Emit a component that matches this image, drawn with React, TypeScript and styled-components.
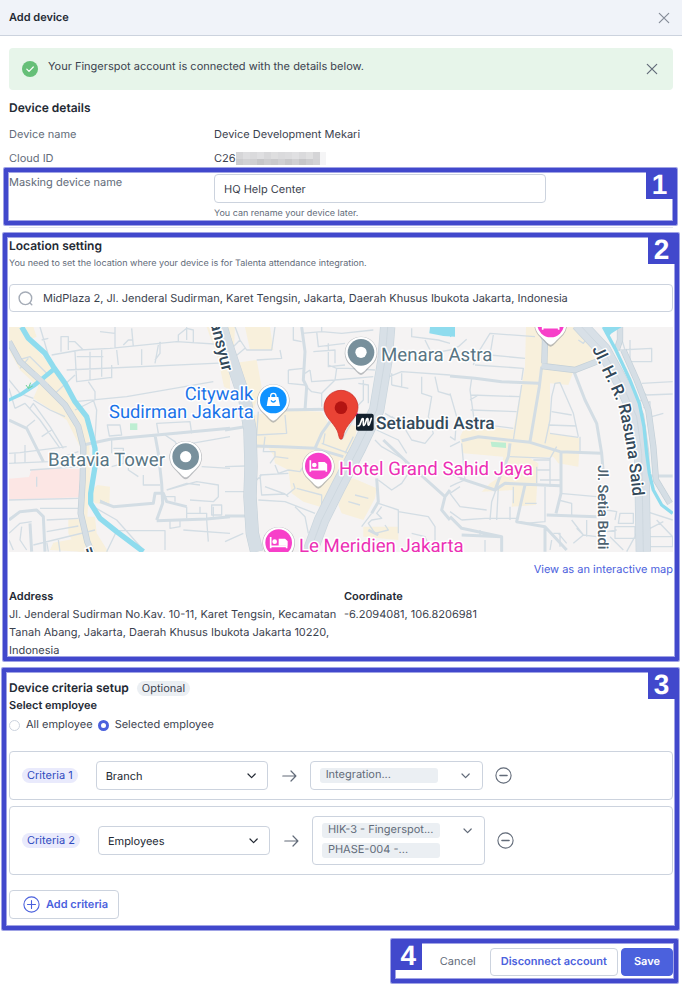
import React, { useState } from 'react';
import styled, { createGlobalStyle } from 'styled-components';

const color = {
  ink: '#232933',
  text: '#3b424e',
  muted: '#626b79',
  line: '#ccd3de',
  brand: '#4b61dd',
  callout: '#4148cc',
  calloutEdge: 'rgba(65, 72, 204, 0.5)',
};

const GlobalStyle = createGlobalStyle`
  *, *::before, *::after { box-sizing: border-box; }
  body {
    margin: 0;
    background: #fff;
    color: ${color.text};
    font-family: Inter, "Liberation Sans", sans-serif;
    font-size: 11px;
    line-height: 18px;
    text-rendering: geometricPrecision;
  }
  button, input, select { font: inherit; color: inherit; margin: 0; text-rendering: inherit; }
  button { cursor: pointer; }
  h1, h2, h3, p, dl, dd, fieldset { margin: 0; padding: 0; border: 0; }
  svg { display: block; flex: none; }
`;

/* ---------- layout ---------- */

const Header = styled.header`
  display: flex;
  align-items: center;
  justify-content: space-between;
  height: 36px;
  padding: 0 12px 0 9px;
  background: #f0f3f9;
  border-bottom: 1px solid ${color.line};
`;

const Title = styled.h1`
  font-size: 11px;
  line-height: 18px;
  font-weight: 600;
  color: ${color.ink};
  padding-bottom: 2px;
`;

const IconButton = styled.button<{ $tone?: string }>`
  display: flex;
  padding: 0;
  border: 0;
  background: none;
  color: ${(p) => p.$tone ?? color.muted};
`;

const Body = styled.main`
  padding: 12px 9px 10px;
`;

const Alert = styled.div`
  display: flex;
  align-items: center;
  min-height: 42px;
  padding: 0 15px 0 13px;
  gap: 10px;
  border-radius: 4px;
  background: #e7f5ea;
`;

const AlertText = styled.p`
  flex: 1;
  padding-bottom: 6px;
`;

const SectionTitle = styled.h2`
  font-size: 12px;
  line-height: 18px;
  font-weight: 600;
  color: ${color.ink};
`;

const Details = styled.section`
  display: grid;
  gap: 6px;
  padding: 9px 0 4px;
  border-bottom: 1px solid #e3e5f1;
`;

const DetailsTitle = styled(SectionTitle)`
  padding-bottom: 2px;
`;

const DetailRow = styled.div`
  position: relative;
  display: grid;
  grid-template-columns: 205px 1fr;
`;

const DetailLabel = styled.label`
  color: ${color.muted};
`;

const Masked = styled.span`
  display: flex;
  align-items: center;
`;

const NameField = styled.div`
  max-width: 332px;
  padding-top: 1px;
`;

const NameInput = styled.input`
  display: block;
  width: 100%;
  height: 29px;
  padding: 0 9px;
  border: 1px solid ${color.line};
  border-radius: 4px;
  background: #fff;
`;

const Hint = styled.p`
  font-size: 9px;
  line-height: 18px;
  color: ${color.muted};
`;

const NameHint = styled(Hint)`
  padding-top: 2px;
`;

const Location = styled.section`
  position: relative;
  padding-top: 9px;
`;

const Search = styled.label`
  display: flex;
  align-items: center;
  gap: 10px;
  height: 28px;
  margin: 11px 0 15px;
  padding: 0 8px;
  border: 1px solid ${color.line};
  border-radius: 4px;
  color: #a5acb7;
`;

const SearchInput = styled.input`
  flex: 1;
  min-width: 0;
  padding: 0;
  border: 0;
  outline: 0;
  background: none;
  color: ${color.text};
`;

const MapFrame = styled.div`
  height: 225px;
  overflow: hidden;
  background: #f5f3f3;
  svg { width: 100%; height: 100%; }
`;

const MapLink = styled.a`
  display: block;
  width: fit-content;
  margin: 8px 0 9px auto;
  color: ${color.brand};
  text-decoration: none;
`;

const Place = styled.dl`
  display: grid;
  grid-template-columns: 1fr 1fr;
  column-gap: 6px;
`;

const PlaceTerm = styled.dt`
  font-weight: 600;
  color: ${color.ink};
`;

const Criteria = styled.section`
  position: relative;
  margin-top: 20px;
`;

const TitleRow = styled.div`
  display: flex;
  align-items: center;
  gap: 8px;
`;

const Badge = styled.span<{ $accent?: boolean }>`
  flex: none;
  height: 15px;
  line-height: 14px;
  padding: 0 5px;
  border-radius: 8px;
  color: ${(p) => (p.$accent ? '#2f4bc0' : color.text)};
  background: ${(p) => (p.$accent ? '#e9eafc' : '#ebeff3')};
`;

const Radios = styled.fieldset`
  display: flex;
  flex-wrap: wrap;
  align-items: center;
  column-gap: 5px;
  margin-bottom: 18px;
`;

const Legend = styled.legend`
  float: left;
  width: 100%;
  padding: 0;
  line-height: 16px;
  font-weight: 600;
  color: ${color.ink};
  margin-bottom: 2px;
`;

const RadioLabel = styled.label`
  display: flex;
  align-items: center;
  gap: 6px;
`;

const Radio = styled.input`
  appearance: none;
  width: 11px;
  height: 11px;
  margin: 2px 0 0;
  border: 1px solid ${color.line};
  border-radius: 50%;
  background: #fff;
  &:checked { border: 3px solid ${color.brand}; }
`;

const CriteriaList = styled.div`
  display: grid;
  gap: 6px;
  margin-bottom: 15px;
`;

const CriteriaRow = styled.div`
  display: flex;
  align-items: center;
  padding: 9px 12px;
  border: 1px solid ${color.line};
  border-radius: 4px;
  color: ${color.muted};
`;

const SelectBox = styled.div`
  display: grid;
  align-items: center;
  width: 172px;
  margin: 0 14px 0 18px;
  color: ${color.ink};
  > * { grid-area: 1 / 1; }
  > svg { justify-self: end; margin-right: 11px; pointer-events: none; }
`;

const Select = styled.select`
  appearance: none;
  width: 100%;
  height: 29px;
  padding: 0 28px 0 9px;
  border: 1px solid ${color.line};
  border-radius: 4px;
  background: #fff;
`;

const MultiSelect = styled.button`
  display: flex;
  align-items: flex-start;
  justify-content: space-between;
  width: 173px;
  margin: 0 12px 0 13px;
  padding: 6px 11px 6px 9px;
  border: 1px solid ${color.line};
  border-radius: 4px;
  background: #fff;
  text-align: left;
`;

const Chips = styled.span`
  display: grid;
  gap: 5px;
  width: 118px;
`;

const Chip = styled.span`
  height: 15px;
  line-height: 13px;
  padding: 0 6px;
  border-radius: 3px;
  background: #ebeff3;
  white-space: nowrap;
`;

const Button = styled.button<{ $kind?: 'primary' | 'ghost' }>`
  display: flex;
  align-items: center;
  height: 28px;
  padding: 0 ${(p) => (p.$kind === 'primary' ? 12 : 10)}px 2px;
  border: 1px solid ${(p) => (p.$kind === 'primary' ? color.brand : p.$kind === 'ghost' ? 'transparent' : color.line)};
  border-radius: 4px;
  background: ${(p) => (p.$kind === 'primary' ? color.brand : '#fff')};
  color: ${(p) => (p.$kind === 'primary' ? '#fff' : p.$kind === 'ghost' ? color.muted : color.brand)};
  font-weight: ${(p) => (p.$kind === 'ghost' ? 400 : 600)};
`;

const AddButton = styled(Button)`
  height: 29px;
  gap: 6px;
  padding: 0 10px 0 13px;
`;

const AddLabel = styled.span`
  padding-bottom: 2px;
`;

const Footer = styled.footer`
  position: relative;
  display: flex;
  justify-content: flex-end;
  gap: 3px;
  width: fit-content;
  margin: 29px 0 0 auto;
`;

/* Numbered outline laid over a part of the form */
const Callout = styled.div<{ $top: number; $right: number; $bottom: number; $left: number }>`
  position: absolute;
  inset: ${(p) => `${-p.$top}px ${-p.$right}px ${-p.$bottom}px ${-p.$left}px`};
  border: 4px solid ${color.callout};
  border-radius: 1px;
  box-shadow: 0 0 0 1px ${color.calloutEdge}, inset 0 0 0 1px ${color.calloutEdge};
  pointer-events: none;
`;

const CalloutNumber = styled.span<{ $start?: boolean }>`
  position: absolute;
  top: 0;
  ${(p) => (p.$start ? 'left: 0;' : 'right: 0;')}
  width: 27px;
  height: 27px;
  background: ${color.callout};
  color: #fff;
  font: 700 28px/26px "Liberation Sans", sans-serif;
  text-align: center;
`;

/* ---------- icons ---------- */

const CloseIcon = () => (
  <svg width="12" height="12" viewBox="0 0 12 12" fill="none" stroke="currentColor" strokeWidth="1.2" strokeLinecap="round">
    <path d="M1.3 1.3l9.4 9.4M10.7 1.3l-9.4 9.4" />
  </svg>
);

const CheckIcon = () => (
  <svg width="16" height="16" viewBox="0 0 16 16" fill="none">
    <circle cx="8" cy="8" r="8" fill="#66bf78" />
    <path d="M4.8 8.1l2.2 2.2 4.3-4.3" stroke="#fff" strokeWidth="1.2" strokeLinecap="round" strokeLinejoin="round" />
  </svg>
);

const SearchIcon = () => (
  <svg width="15" height="15" viewBox="0 0 15 15" fill="none" stroke="currentColor" strokeWidth="1.4" strokeLinecap="round">
    <circle cx="7.4" cy="7.3" r="6.3" />
    <path d="M12 12l1.8 1.8" />
  </svg>
);

const ChevronIcon = () => (
  <svg width="11" height="15" viewBox="0 0 11 15" fill="none" stroke="currentColor" strokeWidth="1.2" strokeLinecap="round" strokeLinejoin="round">
    <path d="M2 6l3.600 3.600L9.200 6" />
  </svg>
);

const ArrowIcon = () => (
  <svg width="15" height="12" viewBox="0 0 15 12" fill="none" stroke="currentColor" strokeWidth="1.2" strokeLinecap="round" strokeLinejoin="round">
    <path d="M.8 6h13M9 1l4.900 5L9 11" />
  </svg>
);

const CircleIcon = ({ plus }: { plus?: boolean }) => (
  <svg width="17" height="17" viewBox="0 0 17 17" fill="none" stroke="currentColor" strokeWidth="1.1" strokeLinecap="round">
    <circle cx="8.5" cy="8.5" r="7.6" />
    <path d={plus ? 'M4.500 8.500h8M8.500 4.500v8' : 'M5 8.500h7'} strokeWidth={plus ? 1.1 : 1.6} />
  </svg>
);

const Mosaic = () => {
  const top = ['#d6d6d8', '#dedee0', '#dadadc', '#dfdfe1', '#d8d8da', '#dededf', '#dadadc', '#dcdcde', '#e0e0e2', '#dadadc', '#e0e0e1', '#d5d5d7', '#f5f5f6'];
  const low = ['#ccccce', '#d2d2d4', '#cfcfd1', '#c6c6c8', '#cdcdcf', '#c9c9cb', '#d0d0d2', '#c8c8ca', '#d0d0d2', '#c6c6c8', '#cdcdcf', '#d3d3d5', '#f5f5f6'];
  return (
    <svg width="90" height="13" viewBox="0 0 90 13" shapeRendering="crispEdges" aria-hidden="true">
      {top.map((fill, i) => <rect key={i} x={i * 7} y="0" width={i === 12 ? 6 : 7} height="7" fill={fill} />)}
      {low.map((fill, i) => <rect key={i} x={i * 7} y="7" width={i === 12 ? 6 : 7} height="6" fill={fill} />)}
    </svg>
  );
};

/* ---------- map ---------- */

type Region = {
  x: number;
  blocks: string;
  lanes: string;
  streets: string;
  avenues: string;
  highways: string;
  water: string;
  lakes: string;
  park: string;
};

const regions: Region[] = [
  {
    x: -27,
    blocks:
      'M27 21H100L110 50L85 60L130 110L190 190L225 245L262 300L268 365L270 480L262 590L285 590L290 640L325 695H235L205 640V598H238L240 440L240 380L200 300L100 235L115 200L60 150L27 90Z M292 495L330 500L328 555L285 550L265 520Z M150 690L160 668L230 655L250 695Z M620 21H690V210L672 200L655 120Z',
    lanes:
      'M120 21L145 105L160 140M145 55L125 60M183 95V50H205V90M205 65H225L250 90M155 105L240 90L330 85L530 65L690 75M225 95L230 185L335 172M230 110H310M270 95V180M305 90V170M335 135V175M160 225L225 165M200 150L690 128M350 90L355 135M345 20V85M300 35L345 40M395 25L400 80M370 75L385 60H400M425 88V135M475 75L465 130M480 65V100L465 120M535 65V45L560 25L580 30V70M560 60V21M225 245L380 230L640 185M225 270L285 240V215L265 185M280 240L290 270L285 360M322 315H360L365 345L328 348ZM335 360V400M340 385H370V430L335 440M475 340L470 310L570 305L575 340M495 345L525 365L545 400M520 380L690 350M605 440L690 445M500 510L560 490L600 495M500 510L590 485L655 495V530L640 545L570 540M430 465V495H480M385 430V450L415 470M490 530H525V545M560 560V595M560 580H620V600M600 560V580M635 555H665V585H635ZM640 590V560M620 600L625 665M550 630L690 640M510 600V625L540 620V600M355 632H495L495 690M280 560L350 600L430 690M350 633L320 695M300 540L330 555M45 265L75 250L120 300L180 385M80 320L105 300M100 240L150 270L195 290M90 265L100 250L150 320L190 385M125 350L155 330M55 120L90 110L140 160M60 145L85 115M27 180L60 220L100 235M27 205L45 265M45 400V430M75 375V430M27 400L60 398L200 380M27 430L145 425L235 395M110 470V500M90 450L240 440M27 540L235 535M120 565H235M140 600L235 595M140 635L235 618M100 675L285 630M27 640L60 610L95 605M65 620L60 660L80 690M40 690L27 660M140 665L145 695M175 660L180 695',
    streets:
      'M27 300L80 325L130 425M27 600L60 575L110 570L130 590L135 695M90 610L95 695M250 375L330 358L470 345L690 325M465 345L475 400L485 490L488 550L470 600M470 602L620 597L690 590M300 545L340 560L460 550L465 520L490 520L500 545L560 560',
    avenues:
      'M27 65L60 125L120 180L195 255L235 320L250 380L248 480L242 580L262 665L275 695',
    highways: '',
    water: 'M65 21L85 55L135 100L160 140L195 190L225 245L260 290L275 345L285 385V440L272 520V550L300 595L350 635L430 695',
    lakes: 'M27 235L60 218L100 190L160 140L170 150L108 200L65 228L27 245Z',
    park: 'M390 310H412V330H390Z',
  },
  {
    x: 648,
    blocks:
      'M0 21H60L75 90H145L135 20H30L25 130L95 120L110 200L85 270L45 240L0 110Z M90 285L170 270L290 275L310 310L345 300L395 320L385 405L340 480L285 560L235 545L200 520L190 450L150 430L145 405L130 385H88Z M370 480L385 475L455 505L450 535L415 600L350 580L340 555Z M415 620H520V660L415 650Z',
    lanes:
      'M30 20L45 60L65 90H140L150 20M95 120L170 115L165 90M45 60L25 80M60 85L30 110M205 20V60L230 65M230 40L290 35V20M290 35L350 40L445 30M275 35L280 80L360 70M310 70V140L360 135M265 95L330 90V130M190 150L235 145M190 150V190L240 195M245 200L260 215L290 220M255 150L260 185L330 180L335 145L310 135M240 160L255 150M330 180L445 170M335 145L370 145L450 150M290 260L290 220L330 180M400 190L430 195V250M415 180V240L395 260M100 275L95 345L185 340L180 285M120 350L115 395H150V410L135 430M150 410L190 415M190 450L160 460L150 435M190 450L225 455L235 440M105 465L190 460M105 465L110 525L180 522L190 530M110 465L95 480M185 525L210 505L205 490M215 505L290 525V560M180 522L120 500M290 370L385 405M300 340L295 370M350 360L390 290M360 400L385 350M460 480L500 510L530 490L550 460L540 420L470 380L450 360M480 175L530 155L675 165M500 195V160M500 195L550 205M530 160V200M590 170V220L620 230L610 290L625 340L600 370L560 360L530 310L500 290M630 170L640 215L675 225M480 280L530 310M455 330L520 360L545 400M560 25V50L640 60L675 70M600 60L620 100L675 90M470 560L455 580L470 595L440 600L430 610L450 640L490 630L480 615M370 545L405 555M390 525L430 535M460 550L490 560L520 570V640M440 580L410 620M100 540L180 545L270 580M210 560L240 590L250 640M520 575L610 590L630 620V690M560 640L600 650L620 695M0 440L60 438M0 515H60M0 665L55 640',
    streets:
      'M0 330L60 320M230 21L240 95L235 180L245 200L240 270M170 270L300 268M90 378L170 380L270 385L290 340L315 305M270 385L355 410M0 588H70M475 360L560 440L660 530L675 510M660 530L650 570L675 600M430 630L460 645M455 475L460 545L440 580',
    avenues: 'M-35 -60L0 60L30 150L60 240L75 330L78 440L75 530L82 640L95 695',
    highways: 'M488 21L480 120L455 270L400 385L340 500L290 600L255 695',
    water: '',
    lakes: 'M615 21H690V50L655 48L613 40Z',
    park: '',
  },
  {
    x: 1323,
    blocks:
      'M228 21H400L440 130L370 155L355 195L300 190V340L390 355L385 440L325 430L310 410L240 415L265 430L258 555L185 560L190 510L95 515L120 490L150 470L160 410L40 400L30 350L50 310L190 330L225 140Z',
    lanes:
      'M0 90L25 80L50 58M70 135L80 105L120 40L255 50M130 45L120 105L225 115M75 135L220 145L215 180M65 175L60 210L75 320M62 225L210 230M62 270L200 275M75 310L190 325M60 240L85 225M215 195L190 360M305 230L315 190L330 188L370 280L385 350M305 230L300 300L285 370M305 275L365 285M295 315L380 318M300 340L385 352M390 350V400M385 60L400 70L410 55M510 90L605 85V125H540M540 60V150M510 40L525 90L535 130M575 190L668 185M575 215L590 225L668 222M570 240L590 250M585 250L600 245L600 265L580 262M605 290L640 280M0 220L20 290L15 360L0 350M30 365L0 380M35 370L45 480L20 490L0 500M45 480L0 460M180 410L300 415V500M300 415L320 380M250 420H300M260 440V490M260 450H300M270 480H330M190 500V550M145 490L125 545L120 600M30 500L0 520L30 560L110 570M0 575L35 600M35 600L105 595H200M180 560V600M145 500L140 600M90 630V650M155 650V695M105 660V695M225 610L285 605V500M225 550H260M325 540L365 550V590M330 520L440 530M310 640H330V680M305 660L300 690M350 670L325 640M365 600L400 645L440 650M370 670L400 645L380 625M410 600V650M440 640L500 630M470 570L500 575L495 600M510 580H550V610H505ZM495 620H555V655H495ZM480 650L520 690M590 575L668 600M620 600L668 650M600 650H668V680H600M640 605L600 625M560 640L530 695',
    streets:
      'M0 168L75 175L155 185L265 190M35 362L85 350L240 367L330 395L455 400M275 140L268 200L240 365M180 370L175 410L150 470L135 510L30 475M135 510L165 490L330 497M333 395V520L318 580M0 590L35 625L155 650V695M155 650L35 645M225 495L200 605L285 620L350 690M285 620V695M290 585L440 590M372 155L405 240L440 310L455 400L460 460M595 468H668',
    avenues: 'M270 21L285 60L283 130M275 138L375 150L440 125M510 21V60L500 90M520 90L560 180L595 270L610 380L618 480L660 550',
    highways: 'M385 10L460 90L520 200L560 290L575 400L580 695',
    water: 'M460 21L495 85L540 180L568 250L582 320L590 400L598 460L610 510L635 555L668 580',
    lakes: 'M0 21L15 25L10 45L0 52ZM465 21H515L485 40L475 50L465 40Z',
    park: 'M122 365L168 368V384L125 380Z',
  },
];

const Pin = ({ x, y, fill, children }: { x: number; y: number; fill: string; children: React.ReactNode }) => (
  <g transform={`translate(${x} ${y})`}>
    <path d="M0 68C-10 66-20 50-32 39A49 49 0 1 1 32 39C20 50 10 66 0 68Z" fill="#8a9096" opacity=".55" />
    <path d="M0 62C-8 62-18 47-31 36A47 47 0 1 1 31 36C18 47 8 62 0 62Z" fill="#fff" />
    <circle r="40" fill={fill} />
    {children}
  </g>
);

const Dot = () => <circle r="17" fill="#fff" />;

const HotelGlyph = () => (
  <g>
    <path d="M-24-17V17M-24 11H24M24 17V-5" fill="none" stroke="#fff" strokeWidth="5" />
    <circle cx="-12" cy="-3" r="7" fill="#fff" />
    <path d="M0-12H19L26-6V9H0Z" fill="#fff" />
  </g>
);

const MapLabel = styled.text<{ $tone: string; $size?: number; $weight?: number }>`
  font-family: Roboto, sans-serif;
  font-size: ${(p) => p.$size ?? 56}px;
  font-weight: ${(p) => p.$weight ?? 400};
  fill: ${(p) => p.$tone};
  stroke: #fff;
  stroke-width: 9px;
  stroke-linejoin: round;
  paint-order: stroke;
`;

const CityMap = () => (
  <svg viewBox="0 0 1992 675" preserveAspectRatio="xMidYMid slice" role="img" aria-label="Map around Setiabudi Astra, Jakarta">
    {regions.map((r) => (
      <g key={r.x} transform={`translate(${r.x} -21)`}>
        <path d={r.blocks} fill="#f8f0dc" />
        <path d={r.park} fill="#bdeed2" />
      </g>
    ))}
    <path d="M0 455L60 450L68 426H212V511L0 518Z" fill="#fce6e4" />
    <g fill="none" strokeLinejoin="round">
      {regions.map((r) => (
        <g key={r.x} transform={`translate(${r.x} -21)`} stroke="#d3dde4">
          <path d={r.lanes} strokeWidth="4" />
          <path d={r.streets} strokeWidth="9" />
        </g>
      ))}
      {regions.map((r) => (
        <g key={r.x} transform={`translate(${r.x} -21)`}>
          <path d={r.avenues} stroke="#c4d0d8" strokeWidth={r.x > 0 && r.x < 1000 ? 40 : 19} />
          <path d={r.avenues} stroke="#d5dee5" strokeWidth={r.x > 0 && r.x < 1000 ? 37 : 15} />
          <path d={r.highways} stroke="#c9d5dd" strokeWidth="46" />
          <path d={r.highways} stroke="#d8e0e7" strokeWidth="42" />
          <path d={r.highways} stroke="#c9d3db" strokeWidth="2" />
          <path d={r.water} stroke="#8fdcee" strokeWidth={r.x > 1000 ? 10 : 16} />
          <path d={r.lakes} fill="#8fdcee" />
        </g>
      ))}
    </g>

    <g transform="translate(-27 -21)">
      <path d="M78 195L85 205L92 188M84 206L98 198" stroke="#6ed39c" strokeWidth="3" fill="none" />
      <path d="M100 160L140 197" stroke="#d5dee5" strokeWidth="15" />
      <MapLabel $tone="#33495a" $size={50} $weight={500} transform="translate(631 10) rotate(76)">ansyur</MapLabel>
      <MapLabel $tone="#1a73e8" $size={55} x="554" y="239">Citywalk</MapLabel>
      <MapLabel $tone="#1a73e8" $size={55} x="327" y="295">Sudirman Jakarta</MapLabel>
      <MapLabel $tone="#587583" x="144" y="438">Batavia Tower</MapLabel>
      <MapLabel $tone="#33495a" $size={46} $weight={500} transform="translate(252 724) rotate(-18)">Jl.</MapLabel>
      <Pin x={557} y={410} fill="#78909c"><Dot /></Pin>
    </g>

    <g transform="translate(648 -21)">
      <MapLabel $tone="#587583" x="468" y="124">Menara Astra</MapLabel>
      <MapLabel $tone="#33495a" $size={52} $weight={500} x="453" y="326">Setiabudi Astra</MapLabel>
      <MapLabel $tone="#ec30b5" x="342" y="466">Hotel Grand Sahid Jaya</MapLabel>
      <MapLabel $tone="#ec30b5" x="222" y="697">Le Meridien Jakarta</MapLabel>
      <Pin x={408} y={97} fill="#78909c"><Dot /></Pin>
      <Pin x={145} y={240} fill="#0f92ff">
        <path d="M-15-9H15L20 18H-20Z" fill="#fff" />
        <path d="M-8-8V-12A8 8 0 0 1 8-12V-8" fill="none" stroke="#fff" strokeWidth="4" />
        <path d="M-7 1Q0 11 7 1" fill="none" stroke="#0f92ff" strokeWidth="4" />
      </Pin>
      <Pin x={280} y={438} fill="#f73fc9"><HotelGlyph /></Pin>
      <Pin x={161} y={668} fill="#f73fc9"><HotelGlyph /></Pin>
      <path d="M380 285L398 278L402 292Z" fill="#ec30b5" />
      <rect x="393" y="281" width="53" height="51" rx="6" fill="#13202d" />
      <path d="M399 318Q405 318 407 308L411 297Q415 293 415 301V313Q416 320 421 310L425 297Q430 292 429 303V312Q430 320 434 310L439 295" fill="none" stroke="#fff" strokeWidth="5" strokeLinecap="round" />
      <path d="M348 358C341 358 342 343 336 331C324 306 297 290 297 262A51 51 0 0 1 399 262C399 290 372 306 360 331C354 343 355 358 348 358Z" fill="#ea4335" stroke="#c5221f" strokeWidth="2" />
      <circle cx="348" cy="263" r="19" fill="#b31412" />
    </g>

    <g transform="translate(1323 -21)">
      <defs>
        <path id="rasuna" d="M426 86C455 150 490 215 506 262C526 345 541 440 551 560" />
      </defs>
      <MapLabel $tone="#33495a" $size={50} $weight={500}>
        <textPath href="#rasuna">Jl. H. R. Rasuna Said</textPath>
      </MapLabel>
      <MapLabel $tone="#4d626f" $size={43} $weight={500} transform="translate(445 436) rotate(90)">Jl. Setia Budi</MapLabel>
      <Pin x={302} y={12} fill="#f73fc9"><HotelGlyph /></Pin>
    </g>
  </svg>
);

/* ---------- page ---------- */

type CriteriaItem = { field: string; values: string[] };

const criteria: CriteriaItem[] = [
  { field: 'Branch', values: ['Integration...'] },
  { field: 'Employees', values: ['HIK-3 - Fingerspot...', 'PHASE-004 -...'] },
];

export default function App() {
  const [scope, setScope] = useState('selected');

  return (
    <>
      <GlobalStyle />
      <Header>
        <Title>Add device</Title>
        <IconButton type="button" aria-label="Close" $tone="#858c98"><CloseIcon /></IconButton>
      </Header>
      <Body>
        <Alert role="status">
          <CheckIcon />
          <AlertText>Your Fingerspot account is connected with the details below.</AlertText>
          <IconButton type="button" aria-label="Dismiss"><CloseIcon /></IconButton>
        </Alert>

        <Details>
          <DetailsTitle>Device details</DetailsTitle>
          <DetailRow>
            <DetailLabel as="span">Device name</DetailLabel>
            <span>Device Development Mekari</span>
          </DetailRow>
          <DetailRow>
            <DetailLabel as="span">Cloud ID</DetailLabel>
            <Masked>C26<Mosaic /></Masked>
          </DetailRow>
          <DetailRow>
            <DetailLabel htmlFor="mask">Masking device name</DetailLabel>
            <NameField>
              <NameInput id="mask" defaultValue="HQ Help Center" />
              <NameHint>You can rename your device later.</NameHint>
            </NameField>
            <Callout $top={5} $right={4} $bottom={2} $left={5}><CalloutNumber>1</CalloutNumber></Callout>
          </DetailRow>
        </Details>

        <Location>
          <SectionTitle>Location setting</SectionTitle>
          <Hint>You need to set the location where your device is for Talenta attendance integration.</Hint>
          <Search>
            <SearchIcon />
            <SearchInput
              aria-label="Search location"
              defaultValue="MidPlaza 2, Jl. Jenderal Sudirman, Karet Tengsin, Jakarta, Daerah Khusus Ibukota Jakarta, Indonesia"
            />
          </Search>
          <MapFrame><CityMap /></MapFrame>
          <MapLink href="#map">View as an interactive map</MapLink>
          <Place>
            <div>
              <PlaceTerm>Address</PlaceTerm>
              <dd>Jl. Jenderal Sudirman No.Kav. 10-11, Karet Tengsin, Kecamatan Tanah Abang, Jakarta, Daerah Khusus Ibukota Jakarta 10220, Indonesia</dd>
            </div>
            <div>
              <PlaceTerm>Coordinate</PlaceTerm>
              <dd>-6.2094081, 106.8206981</dd>
            </div>
          </Place>
          <Callout $top={-5} $right={6} $bottom={2} $left={6}><CalloutNumber>2</CalloutNumber></Callout>
        </Location>

        <Criteria>
          <TitleRow>
            <SectionTitle>Device criteria setup</SectionTitle>
            <Badge>Optional</Badge>
          </TitleRow>
          <Radios>
            <Legend>Select employee</Legend>
            <RadioLabel>
              <Radio type="radio" name="scope" checked={scope === 'all'} onChange={() => setScope('all')} />
              All employee
            </RadioLabel>
            <RadioLabel>
              <Radio type="radio" name="scope" checked={scope === 'selected'} onChange={() => setScope('selected')} />
              Selected employee
            </RadioLabel>
          </Radios>
          <CriteriaList>
            {criteria.map((item, i) => (
              <CriteriaRow key={item.field}>
                <Badge $accent>Criteria {i + 1}</Badge>
                <SelectBox>
                  <Select aria-label={`Criteria ${i + 1} field`} defaultValue={item.field}>
                    <option>Branch</option>
                    <option>Employees</option>
                  </Select>
                  <ChevronIcon />
                </SelectBox>
                <ArrowIcon />
                <MultiSelect type="button" aria-haspopup="listbox" aria-label={`Criteria ${i + 1} values`}>
                  <Chips>{item.values.map((v) => <Chip key={v}>{v}</Chip>)}</Chips>
                  <ChevronIcon />
                </MultiSelect>
                <IconButton type="button" aria-label={`Remove criteria ${i + 1}`}><CircleIcon /></IconButton>
              </CriteriaRow>
            ))}
          </CriteriaList>
          <AddButton type="button"><CircleIcon plus /><AddLabel>Add criteria</AddLabel></AddButton>
          <Callout $top={11} $right={6} $bottom={11} $left={7}><CalloutNumber>3</CalloutNumber></Callout>
        </Criteria>

        <Footer>
          <Button type="button" $kind="ghost">Cancel</Button>
          <Button type="button">Disconnect account</Button>
          <Button type="button" $kind="primary">Save</Button>
          <Callout $top={9} $right={5} $bottom={7} $left={38}><CalloutNumber $start>4</CalloutNumber></Callout>
        </Footer>
      </Body>
    </>
  );
}
